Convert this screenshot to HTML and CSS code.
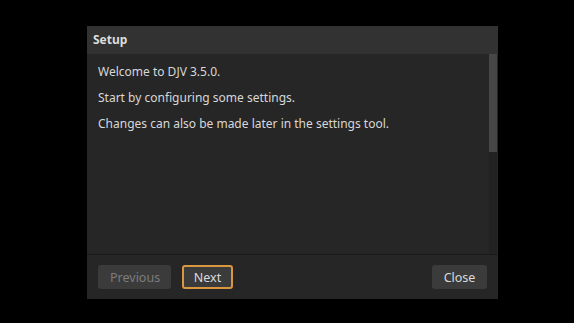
FILE: index.html
```html
<!DOCTYPE html>
<html>
<head>
<meta charset="utf-8">
<link rel="stylesheet" href="styles.css">
</head>
<body>
<div class="dialog">
  <div class="title">Setup</div>
  <div class="content">
    <div class="text">
      <p>Welcome to DJV 3.5.0.</p>
      <p>Start by configuring some settings.</p>
      <p>Changes can also be made later in the settings tool.</p>
    </div>
    <div class="scrollbar"><div class="handle"></div></div>
  </div>
  <div class="footer">
    <button class="btn disabled">Previous</button>
    <button class="btn focused">Next</button>
    <div class="spacer"></div>
    <button class="btn">Close</button>
  </div>
</div>
</body>
</html>
```
FILE: styles.css
```css
html, body {
  margin: 0;
  padding: 0;
  background: #000;
  width: 574px;
  height: 323px;
  overflow: hidden;
}
body {
  font-family: "Noto Sans", "DejaVu Sans", sans-serif;
  color: #d8d8d8;
}
.dialog {
  margin-left: 87px;
  margin-top: 26px;
  width: 411px;
  height: 273px;
  background: #262626;
  display: flex;
  flex-direction: column;
  box-sizing: border-box;
}
.title {
  height: 28px;
  background: #323232;
  font-weight: bold;
  font-size: 12px;
  line-height: 28px;
  padding-left: 6px;
  color: #dcdcdc;
}
.content {
  height: 200px;
  display: flex;
  border-bottom: 1px solid #1a1a1a;
}
.text {
  flex: 1;
  padding: 7px 0 0 11px;
  font-size: 12px;
}
.text p {
  margin: 0;
  height: 26px;
  line-height: 22px;
}
.scrollbar {
  width: 8px;
  margin-right: 1px;
  background: #222;
  display: flex;
  flex-direction: column;
}
.handle {
  height: 98px;
  background: #474747;
}
.footer {
  flex: 1;
  display: flex;
  align-items: center;
  padding: 0 11px;
  gap: 11px;
}
.spacer { flex: 1; }
.btn {
  height: 24px;
  border: 0;
  border-radius: 3px;
  background: #3b3b3b;
  color: #dadada;
  font-family: "Noto Sans", "DejaVu Sans", sans-serif;
  font-size: 12.5px;
  padding: 0 12px;
  box-sizing: border-box;
}
.btn.disabled {
  color: #7d7d7d;
  width: 73px;
}
.btn.focused {
  border: 2px solid #d9973f;
  width: 51px;
  padding: 0;
}
.btn:last-child { width: 55px; padding: 0; }
```
